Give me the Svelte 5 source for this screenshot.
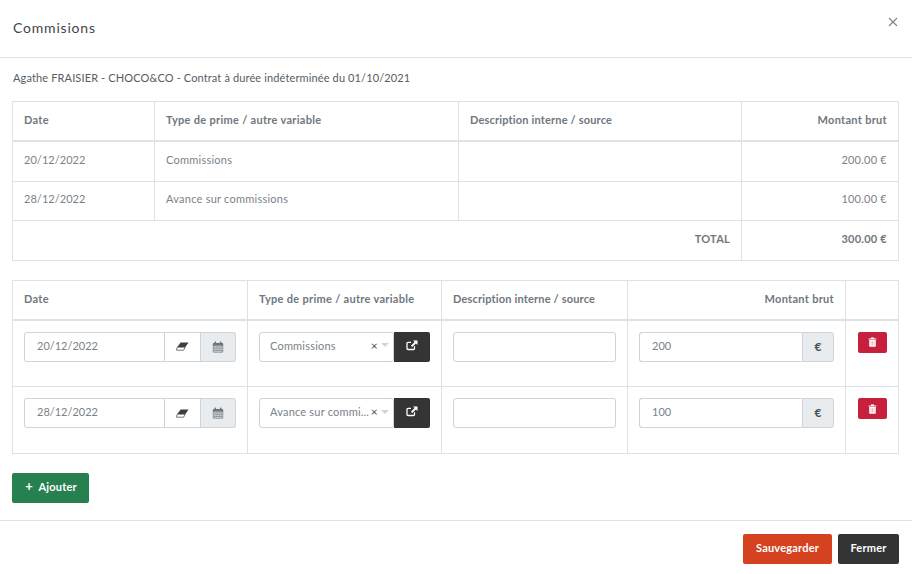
<script>
  const summary = [
    { date: '20/12/2022', type: 'Commissions', amount: '200.00 €' },
    { date: '28/12/2022', type: 'Avance sur commissions', amount: '100.00 €' }
  ];
  const rows = [
    { date: '20/12/2022', type: 'Commissions', amount: '200' },
    { date: '28/12/2022', type: 'Avance sur commi...', amount: '100' }
  ];
</script>

<div class="modal">
  <header class="head">
    <h1>Commisions</h1>
    <svg class="close" width="10" height="10" viewBox="0 0 10 10"><path d="M1 1l8 8M9 1l-8 8" stroke="#7b838a" stroke-width="1.1" fill="none"/></svg>
  </header>
  <main class="body">
    <p class="sub">Agathe FRAISIER - CHOCO&amp;CO - Contrat à durée indéterminée du 01/10/2021</p>
    <table class="t1">
      <colgroup><col style="width:142px"/><col style="width:304px"/><col style="width:283px"/><col/></colgroup>
      <thead>
        <tr><th>Date</th><th>Type de prime / autre variable</th><th class="desc">Description interne / source</th><th class="r">Montant brut</th></tr>
      </thead>
      <tbody>
        {#each summary as s}
          <tr><td class="num">{s.date}</td><td>{s.type}</td><td></td><td class="r">{s.amount}</td></tr>
        {/each}
        <tr class="total"><td colspan="3" class="r">TOTAL</td><td class="r">300.00 €</td></tr>
      </tbody>
    </table>

    <table class="t2">
      <colgroup><col style="width:235px"/><col style="width:194px"/><col style="width:186px"/><col style="width:218px"/><col/></colgroup>
      <thead>
        <tr><th>Date</th><th>Type de prime / autre variable</th><th class="desc">Description interne / source</th><th class="r">Montant brut</th><th></th></tr>
      </thead>
      <tbody>
        {#each rows as r}
          <tr>
            <td>
              <div class="group">
                <div class="field datef">{r.date}</div>
                <div class="erase">
                  <svg width="13" height="9" viewBox="0 0 13 9"><path d="M4.6 0.5h8L9.2 5.2h-8z" fill="#3a3f44"/><path d="M1.2 5.2h8L7.6 8.2H.5z" fill="#fff" stroke="#3a3f44" stroke-width=".7"/></svg>
                </div>
                <div class="addon cal">
                  <svg width="12" height="12" viewBox="0 0 12 12"><rect x=".8" y="2" width="10.4" height="9.5" rx="1" fill="#6c757d"/><rect x="2.5" y=".5" width="1.6" height="3" rx=".6" fill="#6c757d"/><rect x="7.9" y=".5" width="1.6" height="3" rx=".6" fill="#6c757d"/><path d="M1.8 5h8.4v5.5H1.8zM1.8 6.8h8.4M1.8 8.6h8.4M3.9 5v5.5M6 5v5.5M8.1 5v5.5" fill="none" stroke="#e9ecef" stroke-width=".6"/></svg>
                </div>
              </div>
            </td>
            <td>
              <div class="group">
                <div class="select">
                  <span class="val">{r.type}</span>
                  <span class="x">×</span>
                  <span class="caret"></span>
                </div>
                <div class="ext">
                  <svg width="12" height="11" viewBox="0 0 12 11"><path d="M8.5 6.3v2.2a1 1 0 0 1-1 1H2a1 1 0 0 1-1-1V3.3a1 1 0 0 1 1-1h3" fill="none" stroke="#fff" stroke-width="1.3"/><path d="M7 .5h4.5V5L9.9 3.4 6.2 7.1 4.9 5.8l3.7-3.7z" fill="#fff"/></svg>
                </div>
              </div>
            </td>
            <td><div class="field descf"></div></td>
            <td>
              <div class="group">
                <div class="field amountf">{r.amount}</div>
                <div class="addon euro">€</div>
              </div>
            </td>
            <td>
              <div class="trash">
                <svg width="9" height="10" viewBox="0 0 9 10"><path d="M.6 1.6h7.8v1H.6zM3 .4h3v1.2H3z" fill="#fff"/><path d="M1.2 3h6.6v6a.8.8 0 0 1-.8.8H2a.8.8 0 0 1-.8-.8z" fill="#fff"/><path d="M3 4v4.6M4.5 4v4.6M6 4v4.6" stroke="#eeb4c0" stroke-width=".8"/></svg>
              </div>
            </td>
          </tr>
        {/each}
      </tbody>
    </table>

    <button class="btn add"><span class="plus">+</span> Ajouter</button>
  </main>
  <footer class="foot">
    <button class="btn save">Sauvegarder</button>
    <button class="btn closeb">Fermer</button>
  </footer>
</div>

<style>
  :global(body) {
    margin: 0;
    background: #fff;
    font-family: Lato, "Noto Sans", sans-serif;
    color: #6c757d;
  }
  .modal { width: 912px; height: 574px; overflow: hidden; }
  .head {
    height: 57px;
    border-bottom: 1px solid #dee2e6;
    display: flex;
    justify-content: space-between;
    padding: 0 14px 0 13px;
  }
  h1 {
    margin: 19px 0 0;
    font: 400 14px/17px Lato, sans-serif;
    letter-spacing: .8px;
    color: #3f454b;
  }
  .close { margin-top: 17px; }
  .body { padding: 0 13px 0 12px; height: 462px; }
  .sub {
    margin: 0;
    padding: 12px 0 16px 1px;
    font: 400 11px/15px Lato, sans-serif;
    letter-spacing: .13px;
    color: #565d63;
  }
  table {
    border-collapse: collapse;
    table-layout: fixed;
    width: 887px;
    font: 400 11px/15px Lato, sans-serif;
    letter-spacing: .24px;
    color: #7a8289;
  }
  th, td {
    border: 1px solid #dee2e6;
    padding: 0 11px;
    text-align: left;
  }
  th {
    font-weight: 700;
    letter-spacing: .3px;
    color: #6f777e;
    border-bottom: 2px solid #dee2e6;
    height: 39px;
    padding-bottom: 2px;
    box-sizing: border-box;
  }
  th.desc { letter-spacing: .17px; }
  .r { text-align: right; }
  .num { letter-spacing: .05px; }
  .t1 td { height: 39px; box-sizing: border-box; padding-bottom: 6px; }
  .t1 tbody tr:first-child td { height: 41px; padding-bottom: 4px; }
  .total td { height: 40px !important; font-weight: 700; color: #6f777e; padding-bottom: 4px !important; }
  .t2 { margin-top: 19px; }
  .t2 th { padding-bottom: 3px; }
  .t2 td { height: 67px; padding: 11px 11px 0; vertical-align: top; box-sizing: border-box; }
  .group { display: flex; height: 30px; }
  .group > * { flex: none; }
  .field {
    box-sizing: border-box;
    height: 30px;
    border: 1px solid #ced4da;
    border-radius: 3px;
    background: #fff;
    font-size: 11px;
    letter-spacing: 0;
    line-height: 26px;
    padding: 0 12px;
  }
  .datef { width: 141px; border-radius: 3px 0 0 3px; }
  .erase {
    box-sizing: border-box;
    width: 36px;
    height: 30px;
    border: 1px solid #ced4da;
    border-left-width: 0;
    display: flex; align-items: center; justify-content: center;
  }
  .addon {
    box-sizing: border-box;
    height: 30px;
    background: #e9ecef;
    border: 1px solid #ced4da;
    border-left: 0;
    border-radius: 0 3px 3px 0;
    display: flex; align-items: center; justify-content: center;
  }
  .cal { width: 35px; }
  .euro { width: 32px; border-left: 1px solid #ced4da; font-weight: 700; color: #495057; font-size: 12px; padding-bottom: 1px; }
  .select {
    box-sizing: border-box;
    width: 135px;
    height: 30px;
    border: 1px solid #ced4da;
    border-radius: 3px;
    display: flex;
    align-items: center;
    padding: 0 4px 3px 10px;
    font-size: 11px;
  }
  .val { flex: 1; white-space: nowrap; overflow: hidden; letter-spacing: .2px; }
  .x { color: #495057; font-size: 12px; margin-right: 3px; }
  .caret {
    width: 0; height: 0;
    border: 4px solid transparent;
    border-top: 4px solid #ccd5dc;
    border-bottom: 0;
  }
  .ext {
    width: 36px; height: 30px;
    background: #343434;
    border-radius: 0 2px 2px 0;
    display: flex; align-items: center; justify-content: center;
    padding-bottom: 3px;
    box-sizing: border-box;
  }
  .descf { width: 163px; }
  .amountf { width: 163px; border-radius: 3px 0 0 3px; border-right: 0; }
  .trash {
    width: 29px; height: 21px;
    margin-left: 1px;
    background: #c7203c;
    border-radius: 2px;
    display: flex; align-items: center; justify-content: center;
  }
  .btn {
    border: 0;
    border-radius: 2px;
    height: 30px;
    color: #fff;
    font: 700 11px/1 Lato, sans-serif;
    letter-spacing: .2px;
    padding: 0 0 3px;
  }
  .add { display: block; width: 77px; margin-top: 19px; background: #27804f; padding-left: 1px; }
  .plus { font-size: 13px; margin-right: 3px; }
  .foot {
    border-top: 1px solid #dee2e6;
    display: flex;
    justify-content: flex-end;
    gap: 6px;
    padding: 13px 13px 0 0;
  }
  .save { width: 89px; background: #d4421f; }
  .closeb { width: 61px; background: #343434; }
</style>
